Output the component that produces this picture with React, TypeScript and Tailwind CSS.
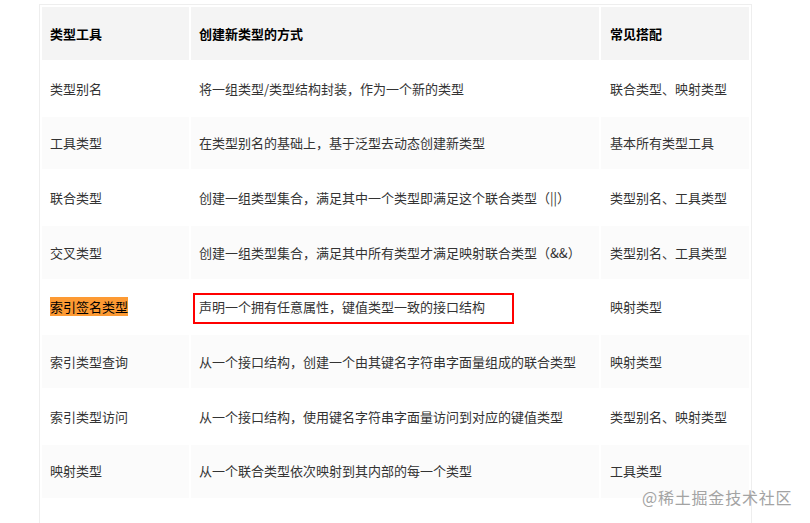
import React from 'react';

// --- Table Data ---
const rows = [
  { tool: '类型别名', how: '将一组类型/类型结构封装，作为一个新的类型', pair: '联合类型、映射类型' },
  { tool: '工具类型', how: '在类型别名的基础上，基于泛型去动态创建新类型', pair: '基本所有类型工具' },
  { tool: '联合类型', how: '创建一组类型集合，满足其中一个类型即满足这个联合类型（||）', pair: '类型别名、工具类型' },
  { tool: '交叉类型', how: '创建一组类型集合，满足其中所有类型才满足映射联合类型（&&）', pair: '类型别名、工具类型' },
  { tool: '索引签名类型', how: '声明一个拥有任意属性，键值类型一致的接口结构', pair: '映射类型', mark: true },
  { tool: '索引类型查询', how: '从一个接口结构，创建一个由其键名字符串字面量组成的联合类型', pair: '映射类型' },
  { tool: '索引类型访问', how: '从一个接口结构，使用键名字符串字面量访问到对应的键值类型', pair: '类型别名、映射类型' },
  { tool: '映射类型', how: '从一个联合类型依次映射到其内部的每一个类型', pair: '工具类型' },
];

const font = { fontFamily: '"Noto Sans CJK SC", "Noto Sans", sans-serif' };

const App: React.FC = () => (
  <div className="w-[810px] h-[523px] bg-white overflow-hidden relative" style={font}>
    <div className="ml-[39px] mt-[4px] w-[713px] border border-[#eeeeee] pb-[40px]">
      <table className="w-[711px] border-separate border-spacing-[2px] text-[13px] text-[#333]">
        <colgroup>
          <col className="w-[147px]" />
          <col className="w-[408px]" />
          <col className="w-[148px]" />
        </colgroup>
        <thead>
          <tr>
            <th className="h-[53px] bg-[#f4f4f4] text-left font-bold text-black pl-2 p-0">类型工具</th>
            <th className="h-[53px] bg-[#f4f4f4] text-left font-bold text-black pl-2 p-0">创建新类型的方式</th>
            <th className="h-[53px] bg-[#f4f4f4] text-left font-bold text-black pl-[9px] p-0">常见搭配</th>
          </tr>
        </thead>
        <tbody>
          {rows.map((r, i) => {
            const bg = i % 2 === 1 ? 'bg-[#fbfbfb]' : 'bg-white';
            return (
              <tr key={r.tool}>
                <td className={`h-[52.7px] p-0 pl-2 ${bg}`}>
                  {r.mark ? <span className="bg-[#fd9a33] text-black">{r.tool}</span> : r.tool}
                </td>
                <td className={`h-[52.7px] p-0 pl-2 ${bg}`}>{r.how}</td>
                <td className={`h-[52.7px] p-0 pl-[9px] ${bg}`}>{r.pair}</td>
              </tr>
            );
          })}
        </tbody>
      </table>
    </div>

    {/* red annotation box */}
    <div className="absolute left-[193px] top-[293px] w-[321px] h-[31px] border-2 border-[#ff0000]" />

    {/* watermark */}
    <div className="absolute left-[642px] top-[485px] text-[16px] text-[#a3a3a3] tracking-[0.8px]">@稀土掘金技术社区</div>
  </div>
);

export default App;
